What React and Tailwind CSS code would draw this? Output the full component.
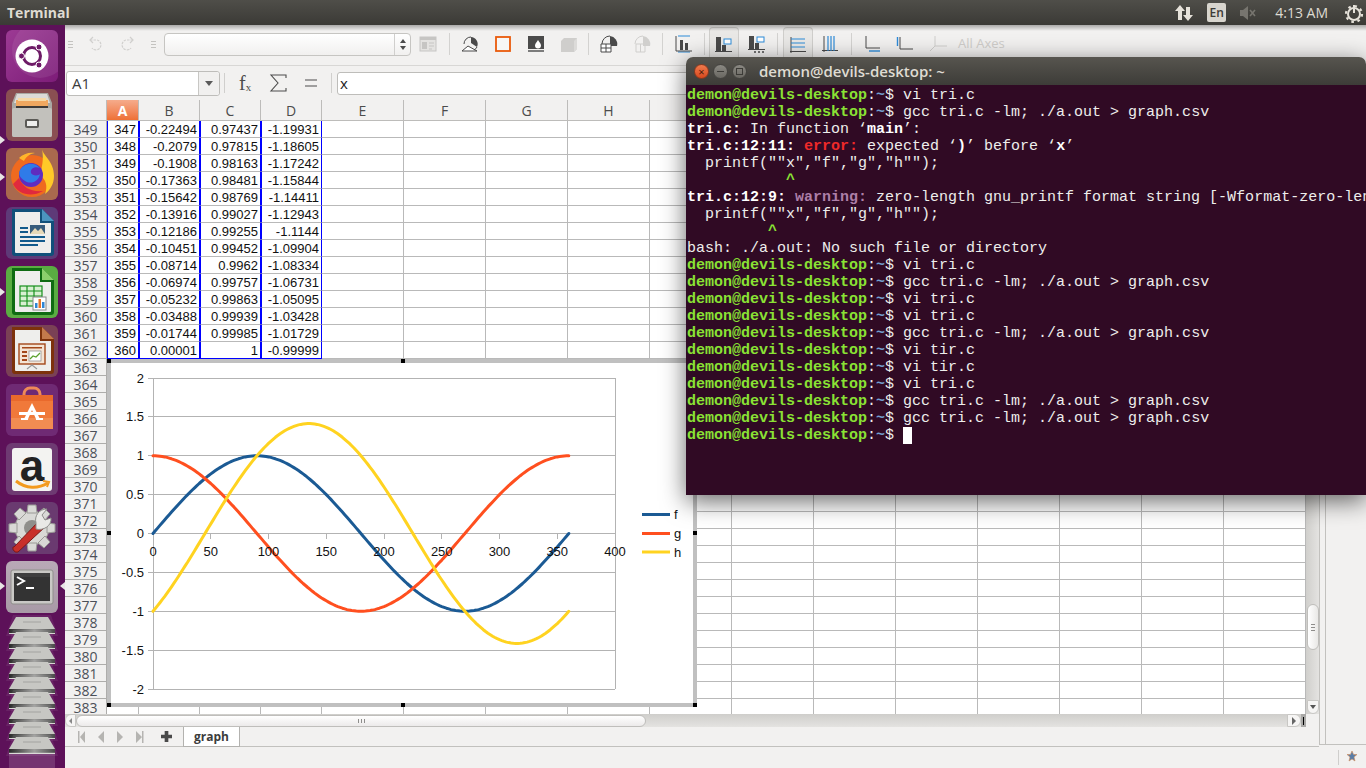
import React from 'react'

const uiFont = { fontFamily: '"Open Sans", "Noto Sans", sans-serif' }

const columns = [
  { label: 'A', width: 'w-[32px]', blue: true, selected: true },
  { label: 'B', width: 'w-[61px]', blue: true },
  { label: 'C', width: 'w-[61px]', blue: true },
  { label: 'D', width: 'w-[61px]', blue: true },
  ...['E', 'F', 'G', 'H', 'I', 'J', 'K', 'L', 'M', 'N', 'O', 'P'].map((label) => ({
    label,
    width: 'w-[82px]',
  })),
]

const values = [
  ['347', '-0.22494', '0.97437', '-1.19931'],
  ['348', '-0.2079', '0.97815', '-1.18605'],
  ['349', '-0.1908', '0.98163', '-1.17242'],
  ['350', '-0.17363', '0.98481', '-1.15844'],
  ['351', '-0.15642', '0.98769', '-1.14411'],
  ['352', '-0.13916', '0.99027', '-1.12943'],
  ['353', '-0.12186', '0.99255', '-1.1144'],
  ['354', '-0.10451', '0.99452', '-1.09904'],
  ['355', '-0.08714', '0.9962', '-1.08334'],
  ['356', '-0.06974', '0.99757', '-1.06731'],
  ['357', '-0.05232', '0.99863', '-1.05095'],
  ['358', '-0.03488', '0.99939', '-1.03428'],
  ['359', '-0.01744', '0.99985', '-1.01729'],
  ['360', '0.00001', '1', '-0.99999'],
]

const rowNumbers = Array.from({ length: 35 }, (_, i) => 349 + i)

function Tile({ className, children }) {
  return (
    <div className={`h-[52px] w-[52px] shrink-0 overflow-hidden rounded-[6px] ${className}`}>
      <svg viewBox="0 0 52 52" className="block h-[52px] w-[52px]">
        {children}
      </svg>
    </div>
  )
}

function DocIcon({ dark, corner, children }) {
  return (
    <>
      <path d="M6 2h30l12 12v32a3 3 0 0 1-3 3H9a3 3 0 0 1-3-3z" fill={dark} />
      <path d="M36 2l12 12H36z" fill={corner} />
      <path d="M9 5h25v11h11v29a1 1 0 0 1-1 1H10a1 1 0 0 1-1-1z" fill="#eeeeec" />
      {children}
    </>
  )
}

function Dock() {
  return (
    <aside className="relative flex w-[65px] shrink-0 flex-col items-center gap-[7px] bg-[#5d1159] pt-[5px] pr-[1px]">
      <Tile className="bg-gradient-to-br from-[#9c3a94] to-[#7d1c78]">
        <circle cx="34" cy="20" r="28" fill="#fff" opacity=".08" />
        <circle cx="26" cy="26" r="16.5" fill="#fff" />
        <circle cx="26" cy="26" r="8.5" fill="none" stroke="#6d1a66" strokeWidth="3" />
        <circle cx="33" cy="17" r="3" fill="#6d1a66" stroke="#fff" />
        <circle cx="33" cy="35" r="3" fill="#6d1a66" stroke="#fff" />
        <circle cx="15.5" cy="26" r="3" fill="#6d1a66" stroke="#fff" />
      </Tile>
      <Tile className="bg-[#8a4f52]">
        <path d="M10 4h32l4 10v32a2 2 0 0 1-2 2H8a2 2 0 0 1-2-2V14z" fill="#a9a8a3" />
        <path d="M11 5h30l3 9H8z" fill="#dcdbd7" />
        <rect x="10" y="13" width="32" height="6" fill="#3f3b38" />
        <rect x="10" y="11" width="32" height="6" fill="#f0a860" />
        <rect x="12" y="9" width="28" height="3" fill="#f6d9a8" />
        <rect x="6" y="19" width="40" height="29" rx="2" fill="#c2c1bc" />
        <rect x="19" y="30" width="14" height="9" rx="2" fill="#5b5a56" />
        <rect x="21" y="32" width="10" height="5" fill="#eeeeec" />
      </Tile>
      <Tile className="bg-[#a9694e]">
        <circle cx="26" cy="28" r="21" fill="#ef6a1f" />
        <path d="M36 1c1 7 12 12 12 27 0 8-4 14-9 18 3-8 1-14-5-19 2-8 4-16 2-26z" fill="#ffc928" />
        <circle cx="25" cy="27" r="12" fill="#5f2dbf" />
        <path d="M14 22c5-8 15-8 20-2-6-2-10 1-9 5 1 3 8 3 9 1-1 7-9 11-15 7-5-3-7-7-5-11z" fill="#2f7be8" />
        <path d="M7 36c5 10 18 14 30 7-12 1-20-3-24-13z" fill="#e02a3e" />
        <path d="M13 10c4-4 10-6 16-5-6 1-9 4-11 8z" fill="#ffb52a" />
      </Tile>
      <Tile className="bg-[#5e3a78]">
        <DocIcon dark="#11507a" corner="#4c94c0">
          <rect x="24" y="18" width="15" height="9" fill="#375c7d" />
          <path d="M24 27l5-6 3 3 3-3 4 6z" fill="#e6d9b8" />
          <rect x="14" y="20" width="8" height="2" fill="#125a8c" />
          <rect x="14" y="24" width="8" height="2" fill="#125a8c" />
          <rect x="14" y="29" width="25" height="2" fill="#125a8c" />
          <rect x="14" y="33" width="25" height="2" fill="#125a8c" />
          <rect x="14" y="37" width="18" height="2" fill="#125a8c" />
        </DocIcon>
      </Tile>
      <Tile className="bg-[#5aac42]">
        <DocIcon dark="#0f6b12" corner="#8bd06c">
          <g fill="none" stroke="#16901c" strokeWidth="1.2">
            <rect x="14" y="20" width="22" height="20" fill="#d9f0d2" />
            <path d="M14 25h22M14 30h22M14 35h22M21 20v20M28 20v20" />
          </g>
          <rect x="27" y="31" width="13" height="13" fill="#fff" stroke="#888" />
          <rect x="29" y="37" width="2.5" height="5" fill="#2f86d4" />
          <rect x="32.5" y="33" width="2.5" height="9" fill="#e8762a" />
          <rect x="36" y="36" width="2.5" height="6" fill="#2f86d4" />
        </DocIcon>
      </Tile>
      <Tile className="bg-[#7a4155]">
        <DocIcon dark="#7d320c" corner="#c47a4c">
          <rect x="13" y="19" width="26" height="20" fill="#f4e4d4" stroke="#a3481a" strokeWidth="1.4" />
          <rect x="16" y="22" width="20" height="1.5" fill="#a3481a" />
          <rect x="16" y="26" width="5" height="2" fill="#a3481a" />
          <rect x="16" y="30" width="5" height="2" fill="#a3481a" />
          <rect x="16" y="34" width="5" height="2" fill="#a3481a" />
          <rect x="23" y="26" width="12" height="10" fill="#fff" stroke="#888" strokeWidth=".7" />
          <path d="M24 34l3-3 3 1 4-4" stroke="#5aa02c" strokeWidth="1.2" fill="none" />
          <path d="M21 44l5-4 5 4" stroke="#999" strokeWidth="1.2" fill="none" />
        </DocIcon>
      </Tile>
      <Tile className="bg-[#6f2a74]">
        <path d="M18 14v-4a6 6 0 0 1 6-6h4a6 6 0 0 1 6 6v4" fill="none" stroke="#ee8a58" strokeWidth="3" />
        <path d="M5 11h42v34H5z" fill="#f0793a" />
        <path d="M5 11h42v6H5z" fill="#e9692c" />
        <path d="M5 34h42v11H5z" fill="#f28c52" />
        <path d="M26 19l8 16h-4l-4-9-4 9h-4z" fill="#fff" />
        <rect x="13" y="28" width="26" height="3" fill="#fff" />
        <rect x="15" y="34" width="7" height="2" fill="#fff" />
        <rect x="30" y="34" width="7" height="2" fill="#fff" />
      </Tile>
      <div className="relative h-[52px] w-[52px] shrink-0 rounded-[6px] bg-[#6e3a72]">
        <div className="absolute top-[5px] left-[6px] flex h-[43px] w-[40px] justify-center rounded-[3px] bg-[#f3f3f1] font-['Liberation_Sans',sans-serif] text-[44px] leading-[36px] font-bold text-[#222]">
          a
        </div>
        <svg viewBox="0 0 52 52" className="absolute inset-0 h-[52px] w-[52px]">
          <path d="M10 38c10 8 22 8 32 2" fill="none" stroke="#f39a1e" strokeWidth="3" />
          <path d="M37 38l6 1-2 5" fill="none" stroke="#f39a1e" strokeWidth="2" />
        </svg>
      </div>
      <Tile className="bg-[#6a3a70]">
        <g fill="#d9d9d6" stroke="#9a9a96">
          <circle cx="26" cy="26" r="17" />
          <path d="M22 3h8l1 8h-10zM22 49h8l1-8h-10zM3 22v8l8 1v-10zM49 22v8l-8 1v-10zM8 12l6-6 6 5-7 7zM44 40l-6 6-6-5 7-7zM8 40l6 6 6-5-7-7zM44 12l-6-6-6 5 7 7z" />
        </g>
        <circle cx="26" cy="26" r="8" fill="#8f8f8b" />
        <path d="M8 45l25-26 6 6-27 25a4 4 0 0 1-5-5z" fill="#c8302a" stroke="#7c1a18" />
        <path d="M30 21c-2-7 3-14 11-14l-5 6 3 5 6-2c1 8-8 13-15 11z" fill="#e9e9e6" stroke="#8d8d8a" />
      </Tile>
      <Tile className="bg-gradient-to-b from-[#b9a9b7] to-[#a89aa6]">
        <rect x="5" y="9" width="42" height="34" rx="2" fill="#c9c8c5" stroke="#8f8e8b" />
        <rect x="8" y="12" width="36" height="28" fill="#333" />
        <path d="M8 12h36v4H8z" fill="#3f3f3f" />
        <path d="M11 16l7 4-7 4" fill="none" stroke="#fff" strokeWidth="2" />
        <rect x="20" y="26" width="8" height="2" fill="#fff" />
      </Tile>
      <div className="mt-[-5px] flex flex-col">
        {Array.from({ length: 9 }, (_, i) => (
          <svg key={i} viewBox="0 0 52 21" className={`h-[21px] w-[52px] ${i > 0 ? 'mt-[-6px]' : ''}`}>
            <defs>
              <linearGradient id={`strip${i}`} x1="0" x2="1" y1="0" y2="0">
                <stop offset="0" stopColor="#2a2a2a" />
                <stop offset=".55" stopColor="#9e9e9c" />
                <stop offset="1" stopColor="#4b4b4b" />
              </linearGradient>
            </defs>
            <path d="M7 0h38l7 21H0z" fill="#fff" opacity=".07" />
            <path d="M10 2h32l7 12H3z" fill="#c7c7c3" />
            <path d="M17 7h18" stroke="#a3a3a0" />
            <rect x="3" y="14" width="46" height="4" fill={`url(#strip${i})`} />
            <rect x="3" y="18" width="46" height="1" fill="#d5d5d2" />
          </svg>
        ))}
        <div className="mx-auto mt-[-4px] h-[18px] w-[46px] bg-white/15" />
      </div>
      <div className="absolute top-[111px] left-0 h-0 w-0 border-y-[4px] border-l-[5px] border-y-transparent border-l-[#e8e5e5]" />
      <div className="absolute top-[148px] left-0 h-0 w-0 border-y-[4px] border-l-[5px] border-y-transparent border-l-[#e8e5e5]" />
      <div className="absolute top-[263px] left-0 h-0 w-0 border-y-[4px] border-l-[5px] border-y-transparent border-l-[#e8e5e5]" />
      <div className="absolute top-[557px] left-0 h-0 w-0 border-y-[4px] border-l-[5px] border-y-transparent border-l-[#e8e5e5]" />
      <div className="absolute top-[557px] right-0 h-0 w-0 border-y-[4px] border-r-[5px] border-y-transparent border-r-[#e8e5e5]" />
    </aside>
  )
}

function TopBar() {
  return (
    <header
      style={uiFont}
      className="relative z-20 flex h-[25px] shrink-0 items-center bg-gradient-to-b from-[#4f4e49] to-[#3b3a36] pr-[2px] text-[#dfdbd2]"
    >
      <span className="ml-[7px] text-[14px] font-bold">Terminal</span>
      <svg viewBox="0 0 20 20" className="ml-auto h-[20px] w-[20px]" fill="#e6e2da">
        <path d="M6 2l5 6H8v9H4V8H1zM14 18l5-6h-3V4h-4v8H9z" />
      </svg>
      <span className="ml-[13px] flex h-[19px] w-[19px] items-center justify-center rounded-[2px] bg-[#d8d5ce] text-[12px] font-semibold text-[#3c3b37]">
        En
      </span>
      <svg viewBox="0 0 18 14" className="ml-[13px] h-[14px] w-[18px]" fill="#77756f">
        <path d="M1 4h3l5-4v14L4 10H1z" />
        <path d="M11 4l5 6M16 4l-5 6" stroke="#77756f" strokeWidth="1.6" />
      </svg>
      <span className="ml-[18px] text-[14px] text-[#dfdbd2]">4:13 AM</span>
      <svg viewBox="0 0 20 20" className="ml-[16px] h-[20px] w-[20px]" fill="none" stroke="#e6e2da">
        <circle cx="10" cy="11" r="6" strokeWidth="2" />
        <circle cx="10" cy="11" r="8" strokeWidth="2.2" strokeDasharray="2.6 3.7" />
        <path d="M10 2v8" strokeWidth="2" />
      </svg>
    </header>
  )
}

function Grip() {
  return (
    <span className="flex w-[10px] flex-col items-center gap-[2px]">
      <i className="h-px w-[5px] bg-[#c4c3c0]" />
      <i className="h-px w-[5px] bg-[#c4c3c0]" />
      <i className="h-px w-[5px] bg-[#c4c3c0]" />
    </span>
  )
}

function Sep() {
  return <span className="mx-auto block h-[22px] w-px bg-[#d3d2d0]" />
}

function Tool({ width, selected, children }) {
  return (
    <span
      className={`flex h-[34px] shrink-0 items-center justify-center rounded-t-[4px] ${width} ${
        selected ? 'border border-b-0 border-[#cfcecb] bg-[#e9e8e6]' : ''
      }`}
    >
      <svg viewBox="0 0 18 18" className="h-[18px] w-[18px]">
        {children}
      </svg>
    </span>
  )
}

function Toolbar() {
  return (
    <div className="flex h-[40px] shrink-0 items-center bg-[#f2f1f0] pb-[2px]">
      <Grip />
      <span className="ml-[4px] flex w-[32px] justify-center">
        <svg viewBox="0 0 18 18" className="h-[18px] w-[18px]" fill="none" stroke="#d0cfcd" strokeWidth="1.2">
          <path d="M4 5h7a5 5 0 1 1-5 8" strokeDasharray="2.5 1" />
          <path d="M7 2L4 5l3 3" />
        </svg>
      </span>
      <span className="ml-[1px] flex w-[32px] justify-center">
        <svg viewBox="0 0 18 18" className="h-[18px] w-[18px]" fill="none" stroke="#d0cfcd" strokeWidth="1.2">
          <path d="M14 5H7a5 5 0 1 0 5 8" strokeDasharray="2.5 1" />
          <path d="M11 2l3 3-3 3" />
        </svg>
      </span>
      <span className="ml-[4px]">
        <Grip />
      </span>
      <div className="ml-[6px] flex h-[23px] w-[247px] justify-end rounded-[4px] border border-[#c6c5c2] bg-gradient-to-b from-white to-[#f1f0ef]">
        <span className="flex w-[16px] flex-col items-center justify-center gap-[3px] border-l border-[#d0cfcd]">
          <i className="h-0 w-0 border-x-[3px] border-b-[4px] border-x-transparent border-b-[#4c4c4c]" />
          <i className="h-0 w-0 border-x-[3px] border-t-[4px] border-x-transparent border-t-[#4c4c4c]" />
        </span>
      </div>
      <Tool width="w-[34px]">
        <rect x="1" y="2" width="16" height="14" fill="#e4e3e1" stroke="#c6c5c3" />
        <rect x="1" y="2" width="16" height="3" fill="#c6c5c3" />
        <rect x="3" y="7" width="5" height="7" fill="#c6c5c3" />
        <path d="M10 8h5M10 11h5M10 14h3" stroke="#c6c5c3" />
      </Tool>
      <span className="w-[8px]">
        <Sep />
      </span>
      <Tool width="w-[33px]">
        <path d="M10 2a7 7 0 0 1 6 10l-6-4z" fill="#4a4a4a" />
        <path d="M10 2a7 7 0 0 0-7 7" fill="none" stroke="#4a4a4a" />
        <path d="M7 11l9 5H1z" fill="#fff" stroke="#4a4a4a" />
        <path d="M16 12a7 7 0 0 1-3 3" fill="none" stroke="#4a4a4a" />
      </Tool>
      <Tool width="w-[33px]">
        <rect x="2" y="2" width="14" height="14" fill="#f7f7f6" stroke="#e95a0c" strokeWidth="1.8" />
      </Tool>
      <Tool width="w-[33px]">
        <rect x="1" y="1" width="16" height="13" fill="#4a4a4a" />
        <path d="M11 5c2 3 3 4 3 5.500a3 3 0 0 1-6 0C8 9 9 8 11 5z" fill="#fff" />
        <path d="M1 16h16" stroke="#4a4a4a" strokeWidth="1.4" />
      </Tool>
      <Tool width="w-[33px]">
        <path d="M4 3h13v11l-3 3H1V6z" fill="#cfcecc" />
        <path d="M14 6l3-3v11l-3 3z" fill="#dcdbd9" />
      </Tool>
      <span className="w-[7px]">
        <Sep />
      </span>
      <Tool width="w-[33px]">
        <path d="M10 1a8 8 0 0 1 7 10h-7z" fill="#4a4a4a" />
        <path d="M10 1a8 8 0 0 0-8 8" fill="none" stroke="#4a4a4a" />
        <path d="M1 9h10v8H1zM6 9v8M1 13h10" fill="#fff" stroke="#4a4a4a" />
      </Tool>
      <Tool width="w-[33px]">
        <path d="M10 1a8 8 0 0 1 7 10h-7z" fill="#d0cfcd" />
        <path d="M10 1a8 8 0 0 0-8 8M3 9h9v8H3zM7.500 9v8" fill="none" stroke="#d0cfcd" />
      </Tool>
      <span className="w-[9px]">
        <Sep />
      </span>
      <Tool width="w-[33px]">
        <path d="M3 1h12M3 17h12" stroke="#2d8bd8" strokeWidth="1.2" />
        <path d="M1 1v15h16" fill="none" stroke="#4a4a4a" />
        <rect x="5" y="5" width="3" height="10" fill="#4a4a4a" />
        <rect x="10" y="8" width="3" height="7" fill="#4a4a4a" />
      </Tool>
      <span className="w-[9px]">
        <Sep />
      </span>
      <Tool width="w-[30px]" selected>
        <rect x="1" y="1" width="5" height="14" fill="#4a4a4a" />
        <rect x="7" y="9" width="4" height="6" fill="#4a4a4a" />
        <path d="M0 15.500h17" stroke="#4a4a4a" />
        <rect x="9" y="3" width="7" height="5" fill="#fff" stroke="#2d8bd8" />
      </Tool>
      <Tool width="w-[36px]">
        <rect x="1" y="1" width="5" height="13" fill="#4a4a4a" />
        <rect x="7" y="8" width="4" height="6" fill="#4a4a4a" />
        <path d="M0 14.500h17" stroke="#4a4a4a" />
        <rect x="9" y="2" width="7" height="5" fill="#fff" stroke="#2d8bd8" />
        <path d="M6 17h2M10 17h2M14 17h2" stroke="#4a4a4a" strokeWidth="1.6" />
      </Tool>
      <span className="mr-[4px] w-[4px]">
        <Sep />
      </span>
      <Tool width="w-[30px]" selected>
        <path d="M2 1v16" stroke="#4a4a4a" />
        <path d="M2 3h14M2 7h14M2 11h14" stroke="#2d8bd8" strokeWidth="1.2" />
        <path d="M1 15.500h16" stroke="#4a4a4a" />
      </Tool>
      <Tool width="w-[34px]">
        <path d="M1 15.500h16" stroke="#4a4a4a" />
        <path d="M3 1v16" stroke="#4a4a4a" />
        <path d="M7 1v15M10 1v15M13 1v15" stroke="#2d8bd8" strokeWidth="1.2" />
      </Tool>
      <span className="w-[8px]">
        <Sep />
      </span>
      <Tool width="w-[34px]">
        <path d="M3 1v12h14" fill="none" stroke="#4a4a4a" />
        <path d="M6 16h11" stroke="#2d8bd8" strokeWidth="1.4" />
      </Tool>
      <Tool width="w-[32px]">
        <path d="M4 2v12h13" fill="none" stroke="#4a4a4a" />
        <path d="M1.500 2v9" stroke="#2d8bd8" strokeWidth="1.4" />
      </Tool>
      <Tool width="w-[34px]">
        <path d="M6 1v10h12M6 11l-5 5" fill="none" stroke="#cfcecc" />
      </Tool>
      <span style={uiFont} className="ml-[3px] text-[13px] whitespace-nowrap text-[#cfcdca]">
        All Axes
      </span>
    </div>
  )
}

function FormulaBar() {
  return (
    <div style={uiFont} className="flex h-[35px] shrink-0 items-center border-t border-[#d8d7d5] bg-[#f2f1f0] pl-[1px]">
      <div className="flex h-[25px] w-[154px] items-center rounded-[3px] border border-[#bebdba] bg-white pl-[5px] text-[15px] text-[#3c3c3c]">
        <span className="flex-1">A1</span>
        <span className="flex h-full w-[21px] items-center justify-center rounded-r-[3px] border-l border-[#c8c7c4] bg-[#f1f0ef]">
          <i className="h-0 w-0 border-x-[4px] border-t-[5px] border-x-transparent border-t-[#5a5a5a]" />
        </span>
      </div>
      <span className="ml-[4px] h-[20px] w-px bg-[#d0cfcd]" />
      <span className="ml-[14px] flex w-[14px] items-end font-['Liberation_Serif',serif] text-[20px] leading-none text-[#4c4c4c]">
        f<span className="text-[11px]">x</span>
      </span>
      <svg viewBox="0 0 18 18" className="ml-[16px] h-[18px] w-[18px]" fill="none" stroke="#4c4c4c" strokeWidth="1.1">
        <path d="M17 4V1H2l7 8-7 8h15v-3" />
      </svg>
      <svg viewBox="0 0 14 10" className="ml-[17px] h-[10px] w-[14px]" stroke="#4c4c4c" strokeWidth="1.2">
        <path d="M1 2h12M1 8h12" />
      </svg>
      <span className="ml-[13px] h-[20px] w-px bg-[#d0cfcd]" />
      <div className="ml-[5px] flex h-[23px] flex-1 items-center rounded-[3px] border border-[#bebdba] bg-white pl-[2px] text-[15px] text-[#222]">
        x
      </div>
    </div>
  )
}

function ChartCurve({ fn, color }) {
  const points = Array.from({ length: 181 }, (_, i) => {
    const deg = i * 2
    const rad = (deg * Math.PI) / 180
    return `${(153 + deg * 1.155).toFixed(1)},${(533.5 - fn(rad) * 77.75).toFixed(1)}`
  })
  return (
    <polyline
      points={points.join(' ')}
      fill="none"
      stroke={color}
      strokeWidth="3"
      strokeLinecap="round"
      strokeLinejoin="round"
    />
  )
}

function Chart() {
  const yTicks = ['2', '1.5', '1', '0.5', '0', '-0.5', '-1', '-1.5', '-2']
  const xTicks = [0, 50, 100, 150, 200, 250, 300, 350, 400]
  return (
    <div className="absolute top-[259px] left-[42px] h-[348px] w-[590px] border-4 border-[#c0c0c0] bg-white">
      <svg viewBox="111 363 582 340" className="block h-[340px] w-[582px]" fontFamily="'Liberation Sans', sans-serif" fontSize="13" fill="#111">
        {yTicks.map((label, i) => {
          const y = Math.floor(378 + i * 38.875) + 0.5
          return (
            <g key={label}>
              <line x1="148" x2="615" y1={y} y2={y} stroke="#b3b3b3" />
              <text x="144" y={y + 4.5} textAnchor="end">
                {label}
              </text>
            </g>
          )
        })}
        <line x1="153.500" x2="153.500" y1="378" y2="689" stroke="#b3b3b3" />
        <line x1="615.500" x2="615.500" y1="378" y2="689" stroke="#b3b3b3" />
        {xTicks.map((tick) => (
          <line
            key={tick}
            x1={Math.floor(153 + tick * 1.155) + 0.5}
            x2={Math.floor(153 + tick * 1.155) + 0.5}
            y1="533"
            y2="539"
            stroke="#b3b3b3"
          />
        ))}
        <ChartCurve fn={(r) => Math.sin(r)} color="#1b5a94" />
        <ChartCurve fn={(r) => Math.cos(r)} color="#ff4f1f" />
        <ChartCurve fn={(r) => Math.sin(r) - Math.cos(r)} color="#ffd320" />
        {xTicks.map((tick) => (
          <text key={tick} x={153 + tick * 1.155} y="555.5" textAnchor="middle">
            {tick}
          </text>
        ))}
        <line x1="642" x2="670" y1="514.500" y2="514.500" stroke="#1b5a94" strokeWidth="3" />
        <line x1="642" x2="670" y1="533.500" y2="533.500" stroke="#ff4f1f" strokeWidth="3" />
        <line x1="642" x2="670" y1="552" y2="552" stroke="#ffd320" strokeWidth="3" />
        <text x="674" y="519">f</text>
        <text x="674" y="538">g</text>
        <text x="674" y="557">h</text>
      </svg>
      <i className="absolute top-[-4px] left-[-4px] h-[4px] w-[4px] bg-black" />
      <i className="absolute top-[-4px] left-[290px] h-[4px] w-[4px] bg-black" />
      <i className="absolute top-[-4px] right-[-4px] h-[4px] w-[4px] bg-black" />
      <i className="absolute top-[168px] left-[-4px] h-[4px] w-[4px] bg-black" />
      <i className="absolute top-[168px] right-[-4px] h-[4px] w-[4px] bg-black" />
      <i className="absolute bottom-[-4px] left-[-4px] h-[4px] w-[4px] bg-black" />
      <i className="absolute bottom-[-4px] left-[290px] h-[4px] w-[4px] bg-black" />
      <i className="absolute right-[-4px] bottom-[-4px] h-[4px] w-[4px] bg-black" />
    </div>
  )
}

function SheetGrid() {
  return (
    <div className="relative flex h-[614px] w-[1241px] shrink-0 flex-col overflow-hidden bg-white">
      <div style={uiFont} className="flex h-[21px] shrink-0 text-[14px] leading-[21px] text-[#4c4c4c]">
        <div className="w-[42px] shrink-0 border-r border-b border-[#bdbcba] bg-[#f2f1f0]" />
        {columns.map((col) => (
          <div
            key={col.label}
            className={`shrink-0 border-r border-b border-[#bdbcba] text-center ${col.width} ${
              col.selected
                ? 'bg-gradient-to-b from-[#f5ab8b] to-[#ee7034] font-bold text-white'
                : 'bg-[#f2f1f0]'
            }`}
          >
            {col.label}
          </div>
        ))}
      </div>
      {rowNumbers.map((row, r) => (
        <div key={row} className="flex h-[17px] shrink-0 font-['Liberation_Sans',sans-serif] text-[13px] leading-[17px] text-[#111]">
          <div
            style={uiFont}
            className="w-[42px] shrink-0 border-r border-b border-[#aeadab] bg-[#f2f1f0] text-center text-[14px] leading-[17px] text-[#4c5058]"
          >
            {row}
          </div>
          {columns.map((col, c) => (
            <div
              key={col.label}
              className={`shrink-0 border-b pr-[2px] text-right ${col.width} ${
                col.blue && r < 14
                  ? `border-x border-x-[#0000ff] ${r === 13 ? 'border-b-[#0000ff]' : 'border-b-[#b9b9b9]'}`
                  : 'border-r border-[#b9b9b9]'
              }`}
            >
              {values[r] && values[r][c]}
            </div>
          ))}
        </div>
      ))}
      <Chart />
    </div>
  )
}

function CalcWindow() {
  return (
    <main className="relative flex min-w-0 flex-1 flex-col bg-[#f2f1f0]">
      <div className="pointer-events-none absolute top-0 right-0 left-0 z-10 h-[6px] bg-gradient-to-b from-black/30 to-transparent" />
      <Toolbar />
      <FormulaBar />
      <div className="flex h-[614px] shrink-0">
        <SheetGrid />
        <div className="flex w-[13px] shrink-0 flex-col items-center justify-end bg-gradient-to-r from-[#d0cfcc] to-[#e4e3e1]">
          <div className="mb-[50px] flex h-[46px] w-[12px] flex-col items-center justify-center gap-[2px] rounded-[6px] border border-[#bfbebb] bg-gradient-to-r from-white to-[#e9e8e6]">
            <i className="h-px w-[4px] bg-[#8e8d8b]" />
            <i className="h-px w-[4px] bg-[#8e8d8b]" />
            <i className="h-px w-[4px] bg-[#8e8d8b]" />
          </div>
          <div className="flex h-[14px] w-[12px] items-center justify-center rounded-b-[6px] border border-[#c8c7c4] bg-[#f6f5f4]">
            <i className="h-0 w-0 border-x-[3px] border-t-[4px] border-x-transparent border-t-[#555]" />
          </div>
        </div>
        <div className="h-[645px] flex-1 border-b border-[#c2c1be]">
          <div className="h-full w-[7px] border-x border-[#c2c1be]" />
        </div>
      </div>
      <div className="flex h-[13px] w-[1241px] shrink-0 items-center">
        <div className="flex h-full flex-1 items-center bg-gradient-to-b from-[#cfcecb] to-[#e4e3e1]">
          <span className="flex h-full w-[11px] items-center justify-center rounded-l-[6px] border border-[#c8c7c4] bg-[#f6f5f4]">
            <i className="h-0 w-0 border-y-[3px] border-r-[3px] border-y-transparent border-r-[#888]" />
          </span>
          <div className="flex h-[12px] w-[570px] items-center justify-center gap-[2px] rounded-[6px] border border-[#bfbebb] bg-gradient-to-b from-white to-[#eceaea]">
            <i className="h-[4px] w-px bg-[#8e8d8b]" />
            <i className="h-[4px] w-px bg-[#8e8d8b]" />
            <i className="h-[4px] w-px bg-[#8e8d8b]" />
          </div>
          <span className="ml-auto flex h-full w-[14px] items-center justify-center rounded-r-[6px] border border-[#c8c7c4] bg-[#f6f5f4]">
            <i className="h-0 w-0 border-y-[4px] border-l-[4px] border-y-transparent border-l-[#666]" />
          </span>
        </div>
        <span className="flex h-full w-[5px] justify-center bg-[#aaa9a7]">
          <i className="h-[8px] w-px self-center bg-black" />
        </span>
      </div>
      <div className="flex h-[20px] w-[1254px] shrink-0 items-start border-b border-[#c2c1be]">
        <svg viewBox="0 0 66 14" className="mt-[3px] ml-[13px] h-[14px] w-[66px]" fill="#b5b4b1">
          <path d="M0 1h1.500v12H0zM7 1v12L2 7z" />
          <path d="M26 1v12l-6-6z" />
          <path d="M39 1v12l6-6z" />
          <path d="M58 1v12l6-6zM64 1h1.500v12H64z" />
        </svg>
        <svg viewBox="0 0 12 12" className="mt-[4px] ml-[17px] h-[11px] w-[11px]" fill="#4a4a4a">
          <path d="M4 0h4v4h4v4H8v4H4V8H0V4h4z" />
        </svg>
        <div
          style={uiFont}
          className="ml-[11px] flex h-[20px] w-[57px] items-center justify-center border-x border-b border-[#b3b2af] bg-white text-[12px] font-bold text-[#3c3c3c]"
        >
          graph
        </div>
      </div>
      <div className="flex min-h-0 flex-1 justify-end">
        <span className="mt-[3px] h-[15px] w-px bg-[#cfcecc]" />
        <svg viewBox="0 0 12 12" className="mt-[3px] mr-[8px] ml-[7px] h-[12px] w-[12px]">
          <path d="M6 1l1.500 3.500H11L8 7l1 4-3-2-3 2 1-4-3-2.500h3.500z" fill="#5a7ea8" stroke="#d08a55" strokeWidth=".6" />
        </svg>
      </div>
    </main>
  )
}

function Prompt({ children }) {
  return (
    <div>
      <b className="text-[#8ae234]">demon@devils-desktop</b>:<b className="text-[#729fcf]">~</b>$ {children}
    </div>
  )
}

function Terminal() {
  const gcc = 'gcc tri.c -lm; ./a.out > graph.csv'
  return (
    <section className="absolute top-[57px] left-[686px] z-10 flex h-[438px] w-[680px] flex-col overflow-hidden rounded-t-[7px] shadow-[0_6px_24px_rgba(0,0,0,0.6)]">
      <div style={uiFont} className="flex h-[28px] shrink-0 items-center bg-gradient-to-b from-[#57554f] to-[#3d3c38] pl-[8px]">
        <span className="flex h-[15px] w-[15px] items-center justify-center rounded-full border border-[#8a3a20] bg-gradient-to-b from-[#f07a4c] to-[#d8481c] text-[11px] leading-none text-[#4a1c0c]">
          ×
        </span>
        <span className="ml-[4px] flex h-[15px] w-[15px] items-center justify-center rounded-full border border-[#454440] bg-gradient-to-b from-[#8a8882] to-[#6a6862]">
          <i className="h-px w-[7px] bg-[#3c3b37]" />
        </span>
        <span className="ml-[4px] flex h-[15px] w-[15px] items-center justify-center rounded-full border border-[#454440] bg-gradient-to-b from-[#8a8882] to-[#6a6862]">
          <i className="h-[7px] w-[7px] border border-[#3c3b37]" />
        </span>
        <span className="ml-[12px] text-[15px] font-semibold whitespace-nowrap text-[#dfdbd2]">
          demon@devils-desktop: ~
        </span>
      </div>
      <pre className="m-0 flex-1 overflow-hidden bg-[#300a24] pt-[2px] pl-[1px] font-['Liberation_Mono',monospace] text-[15px] leading-[17px] whitespace-pre text-[#eeeeec]">
        <Prompt>vi tri.c</Prompt>
        <Prompt>{gcc}</Prompt>
        <div>
          <b className="text-white">tri.c:</b> In function ‘<b className="text-white">main</b>’:
        </div>
        <div>
          <b className="text-white">tri.c:12:11:</b> <b className="text-[#ef2929]">error:</b> expected ‘<b className="text-white">)</b>’ before ‘<b className="text-white">x</b>’
        </div>
        <div>{'  printf(""x","f","g","h"");'}</div>
        <div>
          <b className="text-[#8ae234]">{'           ^'}</b>
        </div>
        <div>
          <b className="text-white">tri.c:12:9:</b> <b className="text-[#ad7fa8]">warning:</b> zero-length gnu_printf format string [-Wformat-zero-length]
        </div>
        <div>{'  printf(""x","f","g","h"");'}</div>
        <div>
          <b className="text-[#8ae234]">{'         ^'}</b>
        </div>
        <div>bash: ./a.out: No such file or directory</div>
        <Prompt>vi tri.c</Prompt>
        <Prompt>{gcc}</Prompt>
        <Prompt>vi tri.c</Prompt>
        <Prompt>vi tri.c</Prompt>
        <Prompt>{gcc}</Prompt>
        <Prompt>vi tir.c</Prompt>
        <Prompt>vi tir.c</Prompt>
        <Prompt>vi tri.c</Prompt>
        <Prompt>{gcc}</Prompt>
        <Prompt>{gcc}</Prompt>
        <Prompt>
          <span className="inline-block h-[17px] w-[9px] bg-white align-top" />
        </Prompt>
      </pre>
    </section>
  )
}

export default function App() {
  return (
    <div className="relative flex h-[768px] w-[1366px] flex-col overflow-hidden bg-[#f2f1f0]">
      <TopBar />
      <div className="flex min-h-0 flex-1">
        <Dock />
        <CalcWindow />
      </div>
      <Terminal />
    </div>
  )
}
